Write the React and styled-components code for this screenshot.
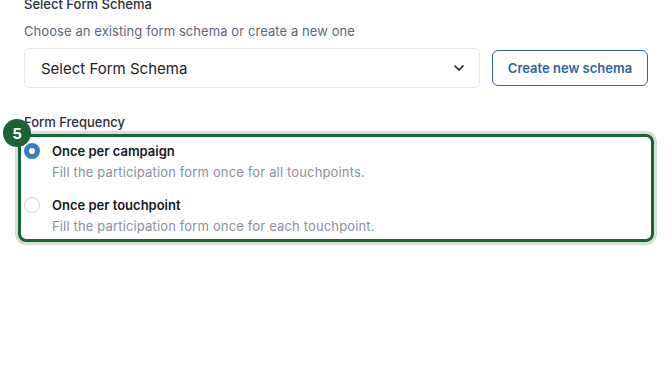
import styled, { createGlobalStyle } from 'styled-components';

const Global = createGlobalStyle`
  html, body { margin: 0; padding: 0; background: #fff; }
  body { font-family: Inter, "Noto Sans", sans-serif; -webkit-font-smoothing: antialiased; }
  * { box-sizing: border-box; }
`

const Page = styled.div`
  width: 672px;
  height: 378px;
  overflow: hidden;
  padding: 0 24px;
`
const Scroller = styled.div`
  margin-top: -6px;
  display: flex;
  flex-direction: column;
`
const Label = styled.div`
  font-size: 13px;
  line-height: 20px;
  font-weight: 500;
  color: #2b2f36;
`
const Hint = styled.div`
  margin-top: 7px;
  font-size: 13px;
  line-height: 20px;
  letter-spacing: 0.08px;
  color: #5f6672;
`
const SchemaRow = styled.div`
  display: flex;
  align-items: center;
  gap: 12px;
  margin-top: 7px;
`
const SelectBox = styled.div`
  flex: 1;
  height: 40px;
  border: 1px solid #e4e7eb;
  border-radius: 6px;
  display: flex;
  align-items: center;
  justify-content: space-between;
  padding: 0 12px 0 16px;
  font-size: 15px;
  color: #1d2127;
`
const OutlineButton = styled.button`
  height: 36px;
  width: 156px;
  border: 1px solid #2f68a4;
  border-radius: 6px;
  background: #fff;
  color: #2d64a0;
  font-family: inherit;
  font-size: 13px;
  font-weight: 600;
`
const Section = styled.div`
  margin-top: 24px;
`
const Group = styled.div`
  position: relative;
  margin-top: 9px;
  display: flex;
  flex-direction: column;
  gap: 13px;
  padding-bottom: 6px;
`
const Option = styled.div`
  display: grid;
  grid-template-columns: 16px 1fr;
  column-gap: 12px;
  row-gap: 1px;
  align-items: center;
`
const Radio = styled.span`
  width: 16px;
  height: 16px;
  border-radius: 50%;
  border: ${p => (p.$checked ? '5px solid #3a7cc4' : '1.5px solid #d3d7dd')};
  background: #fff;
`
const OptionTitle = styled.div`
  font-size: 13px;
  line-height: 20px;
  font-weight: 600;
  color: #16191d;
`
const OptionDesc = styled.div`
  grid-column: 2;
  font-size: 13px;
  line-height: 20px;
  letter-spacing: 0.15px;
  color: #8a919c;
`
const Highlight = styled.div`
  position: absolute;
  left: -6px;
  right: -6px;
  top: -7px;
  bottom: 0;
  border: 3px solid #1d6338;
  border-radius: 8px;
  box-shadow: 0 0 0 3px #cfe2d5;
  pointer-events: none;
`
const Badge = styled.div`
  position: absolute;
  left: -18px;
  top: -18px;
  width: 28px;
  height: 28px;
  border-radius: 50%;
  background: #1d6338;
  color: #fff;
  font-size: 15px;
  font-weight: 700;
  display: flex;
  align-items: center;
  justify-content: center;
`

const Chevron = () => (
  <svg width="16" height="16" viewBox="0 0 24 24" fill="none" stroke="#1d2127" strokeWidth="2.5" strokeLinecap="round" strokeLinejoin="round">
    <path d="m6 9 6 6 6-6" />
  </svg>
)

const options = [
  { id: 'campaign', title: 'Once per campaign', desc: 'Fill the participation form once for all touchpoints.', checked: true },
  { id: 'touchpoint', title: 'Once per touchpoint', desc: 'Fill the participation form once for each touchpoint.', checked: false },
]

export default function App() {
  return (
    <Page>
      <Global />
      <Scroller>
        <Label>Select Form Schema</Label>
        <Hint>Choose an existing form schema or create a new one</Hint>
        <SchemaRow>
          <SelectBox>
            <span>Select Form Schema</span>
            <Chevron />
          </SelectBox>
          <OutlineButton>Create new schema</OutlineButton>
        </SchemaRow>
        <Section>
          <Label>Form Frequency</Label>
          <Group>
            {options.map(o => (
              <Option key={o.id}>
                <Radio $checked={o.checked} />
                <OptionTitle>{o.title}</OptionTitle>
                <OptionDesc>{o.desc}</OptionDesc>
              </Option>
            ))}
            <Highlight>
              <Badge>5</Badge>
            </Highlight>
          </Group>
        </Section>
      </Scroller>
    </Page>
  )
}
